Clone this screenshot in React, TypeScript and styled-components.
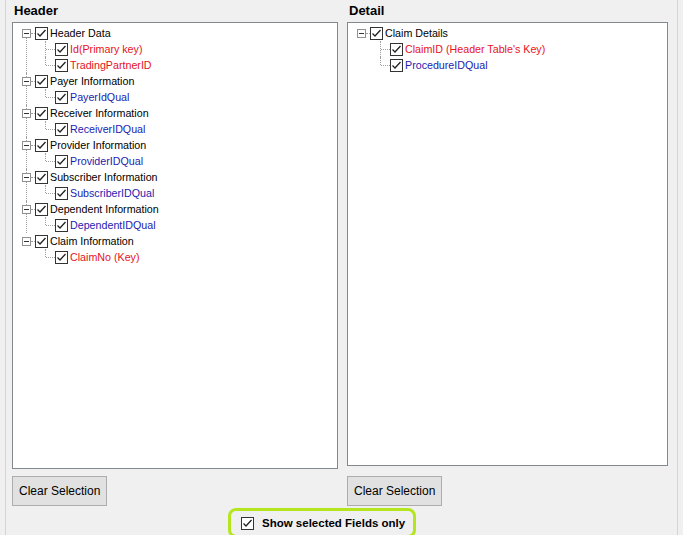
import React from "react";
import styled, { createGlobalStyle } from "styled-components";

const GlobalStyle = createGlobalStyle`
  html, body { margin: 0; padding: 0; background: #f0f0f0; }
  body { font-family: "Liberation Sans", Arial, sans-serif; font-size: 12px; }
`;

const Page = styled.div`
  height: 535px;
  box-sizing: border-box;
  border-left: 1px solid #d5d5d5;
  border-right: 1px solid #d5d5d5;
  margin: 0 5px;
  width: 673px;
  display: flex;
  flex-direction: column;
  padding: 3px 0 0 6px;
`;

const Columns = styled.div`
  display: grid;
  grid-template-columns: 326px 321px;
  column-gap: 9px;
`;

const Column = styled.div`
  display: flex;
  flex-direction: column;
`;

const Title = styled.div`
  font-weight: bold;
  font-size: 13px;
  height: 19px;
  line-height: 16px;
  padding-left: 2px;
  color: #000;
`;

const TreeBox = styled.div<{ $h: number }>`
  height: ${(p) => p.$h}px;
  background: #fff;
  border: 1px solid #828790;
  padding: 2px 0 0 0;
  box-sizing: border-box;
`;

const Group = styled.div<{ $first: boolean; $last: boolean }>`
  position: relative;
  &::before {
    content: "";
    position: absolute;
    left: 13px;
    top: ${(p) => (p.$first ? "8px" : "0")};
    ${(p) => (p.$last ? "height: 0;" : "bottom: 0;")}
    border-left: 1px dotted #a0a0a0;
  }
`;

const Row = styled.div<{ $child?: boolean }>`
  height: 16px;
  display: flex;
  align-items: center;
  padding-left: ${(p) => (p.$child ? "32px" : "9px")};
  white-space: nowrap;
`;

const Expander = styled.span`
  width: 9px;
  height: 9px;
  box-sizing: border-box;
  border: 1px solid #919191;
  background: #fff;
  position: relative;
  z-index: 1;
  &::after {
    content: "";
    position: absolute;
    left: 1px;
    right: 1px;
    top: 3px;
    border-top: 1px solid #333;
  }
`;

const Dash = styled.span`
  width: 4px;
  border-top: 1px dotted #a0a0a0;
`;

const Connector = styled.span<{ $last: boolean }>`
  width: 10px;
  height: 16px;
  position: relative;
  &::before {
    content: "";
    position: absolute;
    left: 0;
    top: 0;
    height: ${(p) => (p.$last ? "8px" : "16px")};
    border-left: 1px dotted #a0a0a0;
  }
  &::after {
    content: "";
    position: absolute;
    left: 1px;
    right: 0;
    top: 8px;
    border-top: 1px dotted #a0a0a0;
  }
`;

const Check = styled.span`
  width: 13px;
  height: 13px;
  box-sizing: border-box;
  border: 1px solid #333;
  background: #fff;
  display: inline-flex;
  align-items: center;
  justify-content: center;
  flex-shrink: 0;
`;

const Label = styled.span<{ $color: string }>`
  color: ${(p) => p.$color};
  margin-left: 2px;
  font-size: 10.7px;
`;

const ButtonRow = styled.div<{ $top: number }>`
  padding-top: ${(p) => p.$top}px;
`;

const Button = styled.button`
  height: 30px;
  padding: 0 6px;
  background: #e1e1e1;
  border: 1px solid #adadad;
  font-family: "Liberation Sans", Arial, sans-serif;
  font-size: 12px;
  color: #000;
`;

const Footer = styled.div`
  display: flex;
  padding-top: 2px;
  padding-left: 216px;
`;

const Highlight = styled.div`
  display: flex;
  align-items: center;
  gap: 8px;
  height: 24px;
  padding: 0 8px 0 10px;
  border: 3px solid #b5e61d;
  border-radius: 8px;
  font-weight: bold;
  font-size: 11.5px;
`;

const Tick = () => (
  <svg width="11" height="11" viewBox="0 0 11 11">
    <path d="M1.5 5.5 L4 8 L9.5 2" stroke="#222" strokeWidth="1.3" fill="none" />
  </svg>
);

const RED = "#e81123";
const BLUE = "#1c1cb0";

type Node = { label: string; children: { label: string; color: string }[] };

const header: Node[] = [
  { label: "Header Data", children: [{ label: "Id(Primary key)", color: RED }, { label: "TradingPartnerID", color: RED }] },
  { label: "Payer Information", children: [{ label: "PayerIdQual", color: BLUE }] },
  { label: "Receiver Information", children: [{ label: "ReceiverIDQual", color: BLUE }] },
  { label: "Provider Information", children: [{ label: "ProviderIDQual", color: BLUE }] },
  { label: "Subscriber Information", children: [{ label: "SubscriberIDQual", color: BLUE }] },
  { label: "Dependent Information", children: [{ label: "DependentIDQual", color: BLUE }] },
  { label: "Claim Information", children: [{ label: "ClaimNo (Key)", color: RED }] },
];

const detail: Node[] = [
  { label: "Claim Details", children: [{ label: "ClaimID (Header Table's Key)", color: RED }, { label: "ProcedureIDQual", color: BLUE }] },
];

const Tree = ({ nodes }: { nodes: Node[] }) => (
  <>
    {nodes.map((n, i) => (
      <Group key={n.label} $first={i === 0} $last={i === nodes.length - 1}>
        <Row>
          <Expander />
          <Dash />
          <Check><Tick /></Check>
          <Label $color="#000">{n.label}</Label>
        </Row>
        {n.children.map((c, j) => (
          <Row $child key={c.label}>
            <Connector $last={j === n.children.length - 1} />
            <Check><Tick /></Check>
            <Label $color={c.color}>{c.label}</Label>
          </Row>
        ))}
      </Group>
    ))}
  </>
);

export default function App() {
  return (
    <>
      <GlobalStyle />
      <Page>
        <Columns>
          <Column>
            <Title>Header</Title>
            <TreeBox $h={447}>
              <Tree nodes={header} />
            </TreeBox>
            <ButtonRow $top={7}><Button>Clear Selection</Button></ButtonRow>
          </Column>
          <Column>
            <Title>Detail</Title>
            <TreeBox $h={444}>
              <Tree nodes={detail} />
            </TreeBox>
            <ButtonRow $top={10}><Button>Clear Selection</Button></ButtonRow>
          </Column>
        </Columns>
        <Footer>
          <Highlight>
            <Check><Tick /></Check>
            Show selected Fields only
          </Highlight>
        </Footer>
      </Page>
    </>
  );
}
